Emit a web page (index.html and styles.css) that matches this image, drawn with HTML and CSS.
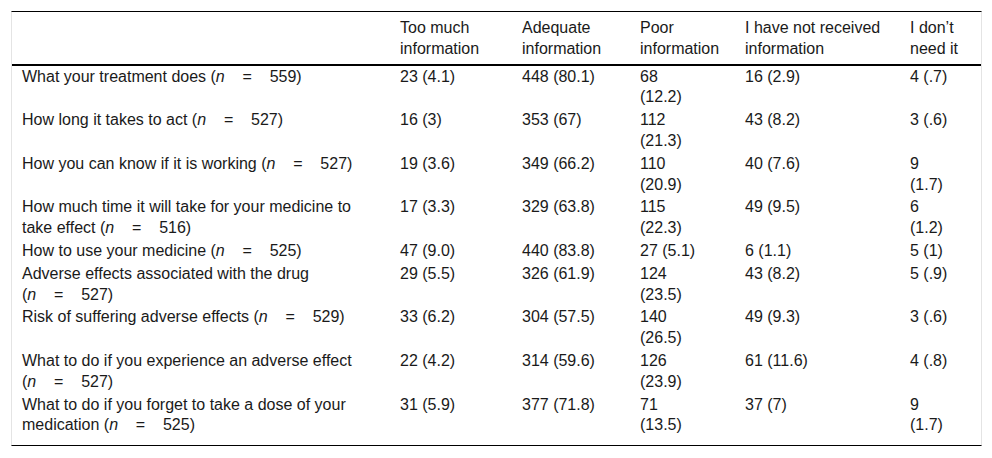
FILE: index.html
```html
<!DOCTYPE html>
<html lang="en">
<head>
<meta charset="utf-8">
<title>Information received</title>
<link rel="stylesheet" href="styles.css">
</head>
<body>
<div class="frame">
<table class="data">
  <colgroup>
    <col class="w1"><col class="w2"><col class="w3"><col class="w4"><col class="w5"><col class="w6">
  </colgroup>
  <thead>
    <tr>
      <th></th>
      <th>Too much information</th>
      <th>Adequate information</th>
      <th>Poor information</th>
      <th>I have not received information</th>
      <th>I don’t need it</th>
    </tr>
  </thead>
  <tbody>
    <tr>
      <td>What your treatment does <span class="n">(<i>n</i>&nbsp;&nbsp;&nbsp;&nbsp;=&nbsp;&nbsp;&nbsp;&nbsp;559)</span></td>
      <td>23 (4.1)</td><td>448 (80.1)</td><td>68 (12.2)</td><td>16 (2.9)</td><td>4 (.7)</td>
    </tr>
    <tr>
      <td>How long it takes to act <span class="n">(<i>n</i>&nbsp;&nbsp;&nbsp;&nbsp;=&nbsp;&nbsp;&nbsp;&nbsp;527)</span></td>
      <td>16 (3)</td><td>353 (67)</td><td>112 (21.3)</td><td>43 (8.2)</td><td>3 (.6)</td>
    </tr>
    <tr>
      <td>How you can know if it is working <span class="n">(<i>n</i>&nbsp;&nbsp;&nbsp;&nbsp;=&nbsp;&nbsp;&nbsp;&nbsp;527)</span></td>
      <td>19 (3.6)</td><td>349 (66.2)</td><td>110 (20.9)</td><td>40 (7.6)</td><td>9 (1.7)</td>
    </tr>
    <tr>
      <td>How much time it will take for your medicine to take effect <span class="n">(<i>n</i>&nbsp;&nbsp;&nbsp;&nbsp;=&nbsp;&nbsp;&nbsp;&nbsp;516)</span></td>
      <td>17 (3.3)</td><td>329 (63.8)</td><td>115 (22.3)</td><td>49 (9.5)</td><td>6 (1.2)</td>
    </tr>
    <tr>
      <td>How to use your medicine <span class="n">(<i>n</i>&nbsp;&nbsp;&nbsp;&nbsp;=&nbsp;&nbsp;&nbsp;&nbsp;525)</span></td>
      <td>47 (9.0)</td><td>440 (83.8)</td><td>27 (5.1)</td><td>6 (1.1)</td><td>5 (1)</td>
    </tr>
    <tr>
      <td>Adverse effects associated with the drug <span class="n">(<i>n</i>&nbsp;&nbsp;&nbsp;&nbsp;=&nbsp;&nbsp;&nbsp;&nbsp;527)</span></td>
      <td>29 (5.5)</td><td>326 (61.9)</td><td>124 (23.5)</td><td>43 (8.2)</td><td>5 (.9)</td>
    </tr>
    <tr>
      <td>Risk of suffering adverse effects <span class="n">(<i>n</i>&nbsp;&nbsp;&nbsp;&nbsp;=&nbsp;&nbsp;&nbsp;&nbsp;529)</span></td>
      <td>33 (6.2)</td><td>304 (57.5)</td><td>140 (26.5)</td><td>49 (9.3)</td><td>3 (.6)</td>
    </tr>
    <tr>
      <td>What to do if you experience an adverse effect <span class="n">(<i>n</i>&nbsp;&nbsp;&nbsp;&nbsp;=&nbsp;&nbsp;&nbsp;&nbsp;527)</span></td>
      <td>22 (4.2)</td><td>314 (59.6)</td><td>126 (23.9)</td><td>61 (11.6)</td><td>4 (.8)</td>
    </tr>
    <tr class="last">
      <td>What to do if you forget to take a dose of your medication <span class="n">(<i>n</i>&nbsp;&nbsp;&nbsp;&nbsp;=&nbsp;&nbsp;&nbsp;&nbsp;525)</span></td>
      <td>31 (5.9)</td><td>377 (71.8)</td><td>71 (13.5)</td><td>37 (7)</td><td>9 (1.7)</td>
    </tr>
  </tbody>
</table>
</div>
</body>
</html>
```

FILE: styles.css
```css
html, body {
  margin: 0;
  padding: 0;
  background: #ffffff;
}

body {
  font-family: "Liberation Sans", Arial, sans-serif;
  font-size: 16px;
  color: #1a1a1a;
  padding: 11px 10px 0 11px;
}

.frame {
  width: 969px;
  border-top: 1px solid #000000;
  border-bottom: 1px solid #000000;
  border-left: 1px solid #e4e4e4;
  border-right: 1px solid #e4e4e4;
}

.data {
  width: 969px;
  table-layout: fixed;
  border-collapse: collapse;
  border-spacing: 0;
  line-height: 20.8px;
}

.w1 { width: 377px; }
.w2 { width: 122px; }
.w3 { width: 118px; }
.w4 { width: 105px; }
.w5 { width: 165px; }
.w6 { width: 82px; }

.data th {
  font-weight: normal;
  text-align: left;
  vertical-align: top;
  padding: 6px 8px 4px 11px;
  border-bottom: 2px solid #000000;
}

.data td {
  text-align: left;
  vertical-align: top;
  padding: 1px 32px 1px 11px;
}

.data th:first-child,
.data td:first-child {
  padding-left: 10px;
}

.data td:nth-child(1) { padding-right: 20px; }
.data td:nth-child(3) { padding-right: 20px; }
.data td:nth-child(4) { padding-right: 34px; }
.data td:nth-child(6) { padding-right: 29px; }

.data tr.last td {
  padding-bottom: 9px;
}

.n {
  white-space: nowrap;
}
```
